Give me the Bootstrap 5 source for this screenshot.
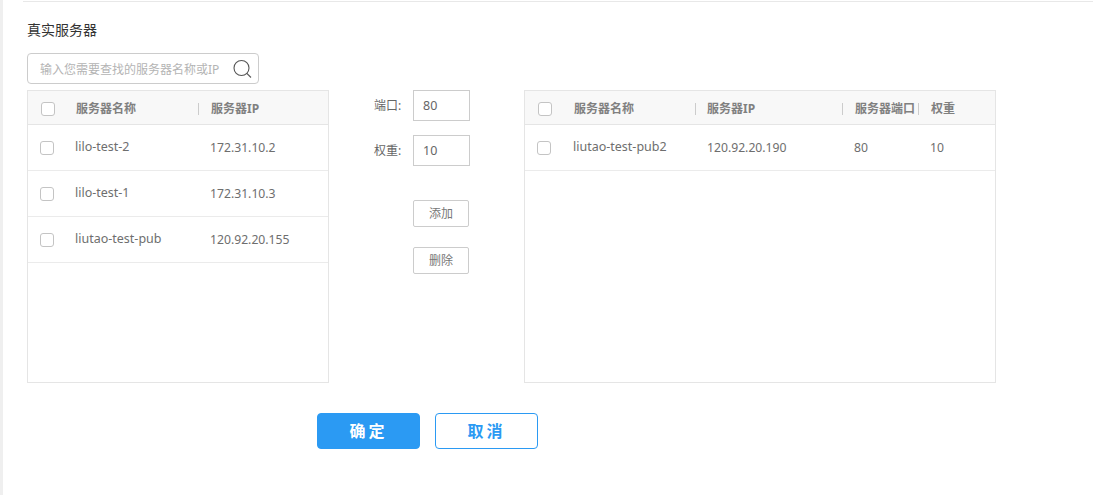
<!DOCTYPE html>
<html lang="zh">
<head>
<meta charset="utf-8">
<title>真实服务器</title>
<link href="https://cdn.jsdelivr.net/npm/bootstrap@5.3.0/dist/css/bootstrap.min.css" rel="stylesheet">
<style>
html,body{height:495px;overflow:hidden}
body{font-family:"Noto Sans","Noto Sans CJK SC",sans-serif;font-size:12px;color:#666;background:#fff;border-left:3px solid #efefef}
.topline{height:2px;margin:0 0 0 20px;border-top:1px solid #e8e8e8;margin-top:1px}
.pagebody{padding:0 0 0 24px}
.ttl{margin:0;padding-top:18px;height:50px;font-size:14px;line-height:17px;color:#333}
.searchbox{width:232px;height:31px;border:1px solid #ccc;border-radius:4px;padding:0 5px 0 12px}
.searchbox input{border:0;outline:0;flex:1;min-width:0;padding:2px 0 0;font-size:12px;color:#666;background:transparent}
.searchbox input::placeholder{color:#b4b4b4;opacity:1}
.panelrow{margin-top:6px}
.srvpanel{height:293px;border:1px solid #e5e5e5;flex:none}
.p-left{width:302px}
.p-right{width:472px}
.midcol{width:195px;flex:none}
.hdr{height:34px;background:#f8f8f8;border-bottom:1px solid #e5e5e5;font-weight:700;color:#808080;padding-top:3px}
.rw{height:46px;border-bottom:1px solid #ebebeb}
.cbx{width:14px;height:14px;border:1px solid #c4c4c4;border-radius:3px;background:#fff;flex:none}
.cell{flex:none;white-space:nowrap;font-size:12px}
.rw .cell{font-size:12.5px;color:#6e6e6e}
.rw .digits{font-size:12.2px;padding-top:1px}
.sep{border-left:1px solid #ccc;height:12px;flex:none}
.c1{width:48px;padding-left:13px;flex:none}
.rw .c1{width:47px;padding-left:12px;padding-top:1px}
.fieldrow{display:flex;align-items:center;padding-left:45px;margin-bottom:14px}
.fieldrow label{width:39px;font-size:12px}
.numbox{width:57px;height:31px;border:1px solid #ccc;padding:0 9px;font-size:12.5px;color:#666;outline:0}
.smallbtn{width:56px;height:27px;border:1px solid #ccc;border-radius:2px;background:#fff;color:#777;font-size:12px;padding:0;display:block;margin-left:84px}
.btn1{margin-top:34px}
.btn2{margin-top:20px}
.okrow{margin:30px 0 0 290px}
.bigbtn{width:103px;height:36px;border-radius:4px;font-size:16px;font-weight:700;letter-spacing:3px;padding:0;border:1px solid #2b9af3}
.b-ok{background:#2b9af3;color:#fff}
.b-no{background:#fff;color:#2b9af3;margin-left:15px}
.w122{width:122px}
.c-name{width:135px}
.h-n{width:122px;padding-left:1px}
.h-i{width:146px;padding-left:11px}
.h-p{width:75px;padding-left:12px}
.h-w{padding-left:12px}
.rw .r-n{width:135px;padding-left:1px}
.r-i{width:147px}
.r-p{width:76px}
</style>
</head>
<body>
<div class="topline"></div>
<div class="pagebody">
  <h6 class="ttl fw-normal">真实服务器</h6>
  <div class="searchbox d-flex align-items-center">
    <input type="text" placeholder="输入您需要查找的服务器名称或IP">
    <svg width="20" height="20" viewBox="0 0 20 20" fill="none" stroke="#555" stroke-width="1.1"><circle cx="8.5" cy="9" r="7.5"/><path d="M13.8 14.3 18 18.5"/></svg>
  </div>
  <div class="panelrow d-flex">
    <div class="srvpanel p-left">
      <div class="hdr d-flex align-items-center">
        <span class="c1"><span class="cbx d-block"></span></span>
        <span class="cell w122">服务器名称</span>
        <span class="sep"></span>
        <span class="cell ms-2 ps-1">服务器IP</span>
      </div>
      <div class="rw d-flex align-items-center"><span class="c1"><span class="cbx d-block"></span></span><span class="cell c-name">lilo-test-2</span><span class="cell digits">172.31.10.2</span></div>
      <div class="rw d-flex align-items-center"><span class="c1"><span class="cbx d-block"></span></span><span class="cell c-name">lilo-test-1</span><span class="cell digits">172.31.10.3</span></div>
      <div class="rw d-flex align-items-center"><span class="c1"><span class="cbx d-block"></span></span><span class="cell c-name">liutao-test-pub</span><span class="cell digits">120.92.20.155</span></div>
    </div>
    <div class="midcol">
      <div class="fieldrow"><label>端口:</label><input class="numbox" value="80"></div>
      <div class="fieldrow"><label>权重:</label><input class="numbox" value="10"></div>
      <button type="button" class="smallbtn btn1">添加</button>
      <button type="button" class="smallbtn btn2">删除</button>
    </div>
    <div class="srvpanel p-right">
      <div class="hdr d-flex align-items-center">
        <span class="c1"><span class="cbx d-block"></span></span>
        <span class="cell h-n">服务器名称</span><span class="sep"></span>
        <span class="cell h-i">服务器IP</span><span class="sep"></span>
        <span class="cell h-p">服务器端口</span><span class="sep"></span>
        <span class="cell h-w">权重</span>
      </div>
      <div class="rw d-flex align-items-center"><span class="c1"><span class="cbx d-block"></span></span><span class="cell r-n">liutao-test-pub2</span><span class="cell digits r-i">120.92.20.190</span><span class="cell digits r-p">80</span><span class="cell digits">10</span></div>
    </div>
  </div>
  <div class="okrow d-flex">
    <button type="button" class="bigbtn b-ok">确定</button>
    <button type="button" class="bigbtn b-no">取消</button>
  </div>
</div>
<script src="https://cdn.jsdelivr.net/npm/bootstrap@5.3.0/dist/js/bootstrap.bundle.min.js"></script>
</body>
</html>
